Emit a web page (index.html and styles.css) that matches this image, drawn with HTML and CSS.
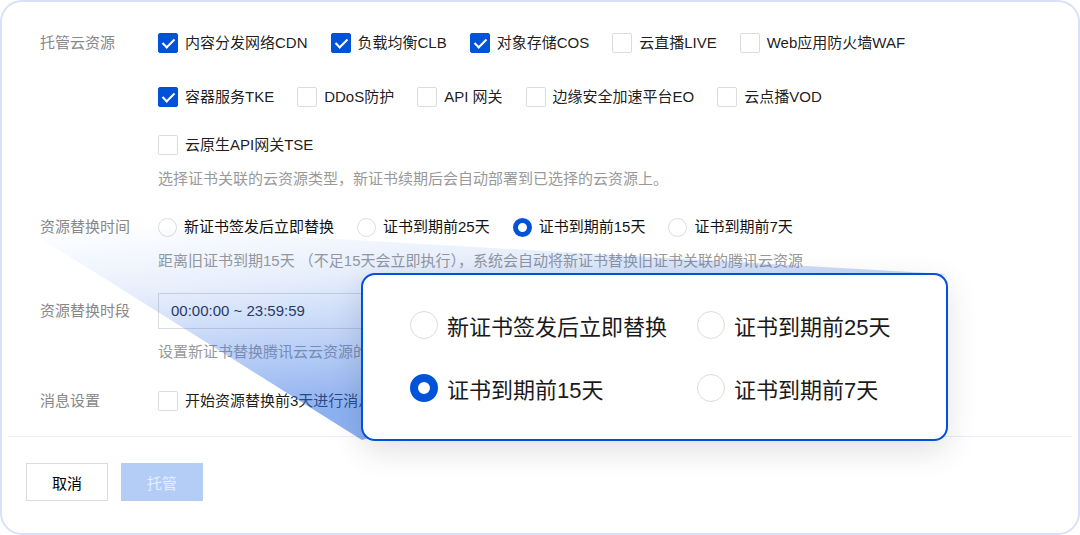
FILE: index.html
```html
<!DOCTYPE html>
<html lang="zh-CN">
<head>
    <meta charset="UTF-8">
    <meta name="viewport" content="width=device-width, initial-scale=1.0">
    <title>托管云资源</title>
    <link rel="stylesheet" href="styles.css">
</head>
<body>
<div class="card">
    <div class="form">
        <div class="row row-resource">
            <div class="label">托管云资源</div>
            <div class="field">
                <div class="check-line first">
                    <label class="check checked"><span class="box"></span>内容分发网络CDN</label>
                    <label class="check checked"><span class="box"></span>负载均衡CLB</label>
                    <label class="check checked"><span class="box"></span>对象存储COS</label>
                    <label class="check"><span class="box"></span>云直播LIVE</label>
                    <label class="check"><span class="box"></span>Web应用防火墙WAF</label>
                </div>
                <div class="check-line">
                    <label class="check checked"><span class="box"></span>容器服务TKE</label>
                    <label class="check"><span class="box"></span>DDoS防护</label>
                    <label class="check"><span class="box"></span>API 网关</label>
                    <label class="check"><span class="box"></span>边缘安全加速平台EO</label>
                    <label class="check"><span class="box"></span>云点播VOD</label>
                </div>
                <div class="check-line last">
                    <label class="check"><span class="box"></span>云原生API网关TSE</label>
                </div>
                <div class="help">选择证书关联的云资源类型，新证书续期后会自动部署到已选择的云资源上。</div>
            </div>
        </div>

        <div class="row row-time">
            <div class="label">资源替换时间</div>
            <div class="field">
                <div class="radio-line">
                    <label class="radio"><span class="dot"></span>新证书签发后立即替换</label>
                    <label class="radio"><span class="dot"></span>证书到期前25天</label>
                    <label class="radio checked"><span class="dot"></span>证书到期前15天</label>
                    <label class="radio"><span class="dot"></span>证书到期前7天</label>
                </div>
                <div class="help">距离旧证书到期15天 （不足15天会立即执行），系统会自动将新证书替换旧证书关联的腾讯云资源</div>
            </div>
        </div>

        <div class="row row-period">
            <div class="label tall">资源替换时段</div>
            <div class="field">
                <div class="input">00:00:00 ~ 23:59:59</div>
                <div class="help">设置新证书替换腾讯云云资源的时间段，建议选择业务低峰期</div>
            </div>
        </div>

        <div class="row row-notice">
            <div class="label">消息设置</div>
            <div class="field">
                <label class="check"><span class="box"></span>开始资源替换前3天进行消息通知</label>
            </div>
        </div>
    </div>

    <div class="footer">
        <button class="btn">取消</button>
        <button class="btn primary" disabled>托管</button>
    </div>

    <!-- magnifier cone + enlarged radio group -->
    <svg class="cone" width="1080" height="535" viewBox="0 0 1080 535">
        <defs>
            <linearGradient id="coneFill" gradientUnits="userSpaceOnUse" x1="0" y1="232" x2="20" y2="440">
                <stop offset="0" stop-color="#3b78e7" stop-opacity="0"/>
                <stop offset="0.35" stop-color="#3b78e7" stop-opacity="0.12"/>
                <stop offset="1" stop-color="#2f6fe4" stop-opacity="0.55"/>
            </linearGradient>
        </defs>
        <polygon points="40,222 946,274 362,440 40,238" fill="url(#coneFill)"/>
    </svg>

    <div class="zoom-box">
        <label class="big-radio"><span class="dot"></span>新证书签发后立即替换</label>
        <label class="big-radio"><span class="dot"></span>证书到期前25天</label>
        <label class="big-radio checked"><span class="dot"></span>证书到期前15天</label>
        <label class="big-radio"><span class="dot"></span>证书到期前7天</label>
    </div>
</div>
</body>
</html>
```

FILE: styles.css
```css
* {
    box-sizing: border-box;
}

body {
    margin: 0;
    background-color: #fff;
    font-family: "Liberation Sans", "Noto Sans CJK SC", sans-serif;
    font-size: 15px;
    color: rgba(0, 0, 0, 0.9);
}

.card {
    position: relative;
    width: 1080px;
    height: 535px;
    border: 2px solid #d8e0fa;
    border-radius: 22px;
    background-color: #fff;
    overflow: hidden;
}

.form {
    padding: 29px 0 0 38px;
}

.row {
    display: flex;
    align-items: flex-start;
}

.label {
    width: 118px;
    flex-shrink: 0;
    line-height: 24px;
    color: #888;
}

.label.tall {
    line-height: 36px;
}

.field {
    flex: 1;
}

.row-resource {
    margin-bottom: 24px;
}

.row-time {
    margin-bottom: 20px;
}

.row-period {
    margin-bottom: 25px;
}

.check-line,
.radio-line {
    display: flex;
    gap: 23px;
    height: 24px;
    margin-bottom: 24px;
}

.check-line.first {
    margin-bottom: 30px;
}

.check-line.last,
.radio-line {
    margin-bottom: 0;
}

.check,
.radio {
    display: flex;
    align-items: center;
    gap: 7px;
    line-height: 24px;
    white-space: nowrap;
}

.box {
    position: relative;
    width: 20px;
    height: 20px;
    border: 1px solid #dcdcdc;
    border-radius: 2px;
    background-color: #fff;
}

.check.checked .box {
    border-color: #0052d9;
    background-color: #0052d9;
}

.check.checked .box::after {
    content: "";
    position: absolute;
    left: 6px;
    top: 2px;
    width: 5px;
    height: 10px;
    border-right: 2.5px solid #fff;
    border-bottom: 2.5px solid #fff;
    transform: rotate(45deg);
}

.radio {
    color: #111;
}

.radio .dot {
    width: 19px;
    height: 19px;
    border: 1px solid #dcdcdc;
    border-radius: 50%;
}

.radio.checked .dot {
    border: 5px solid #0052d9;
}

.help {
    margin-top: 10px;
    line-height: 24px;
    color: #999;
    white-space: nowrap;
}

.input {
    width: 320px;
    height: 36px;
    padding: 0 12px;
    line-height: 34px;
    border: 1px solid #dcdcdc;
    color: #1f2a44;
}

.row-period .help {
    margin-top: 11px;
}

.footer {
    margin: 23px 6px 0;
    padding: 26px 0 0 18px;
    border-top: 1px solid #e9edf6;
    display: flex;
    gap: 13px;
}

.btn {
    width: 82px;
    height: 38px;
    border: 1px solid #dcdcdc;
    background-color: #fff;
    font-family: inherit;
    font-size: 15px;
    color: #000;
}

.btn.primary {
    border-color: #b3cdf6;
    background-color: #b3cdf6;
    color: #e6efff;
}

.cone {
    position: absolute;
    left: -2px;
    top: -2px;
    pointer-events: none;
}

.zoom-box {
    position: absolute;
    left: 359px;
    top: 271px;
    width: 587px;
    height: 168px;
    padding: 34px 0 0 47px;
    border: 2.5px solid #0052d9;
    border-radius: 14px;
    background-color: #fff;
    box-shadow: 0 10px 32px rgba(0, 0, 0, 0.12);
    display: grid;
    grid-template-columns: 287px 1fr;
    grid-auto-rows: 31px;
    row-gap: 32px;
}

.big-radio {
    display: flex;
    align-items: center;
    gap: 9px;
    font-size: 22px;
    color: #1a1a1a;
    white-space: nowrap;
}

.big-radio .dot {
    width: 28px;
    height: 28px;
    border: 1.5px solid #dcdcdc;
    border-radius: 50%;
}

.big-radio.checked .dot {
    border: 8px solid #0052d9;
}
```
